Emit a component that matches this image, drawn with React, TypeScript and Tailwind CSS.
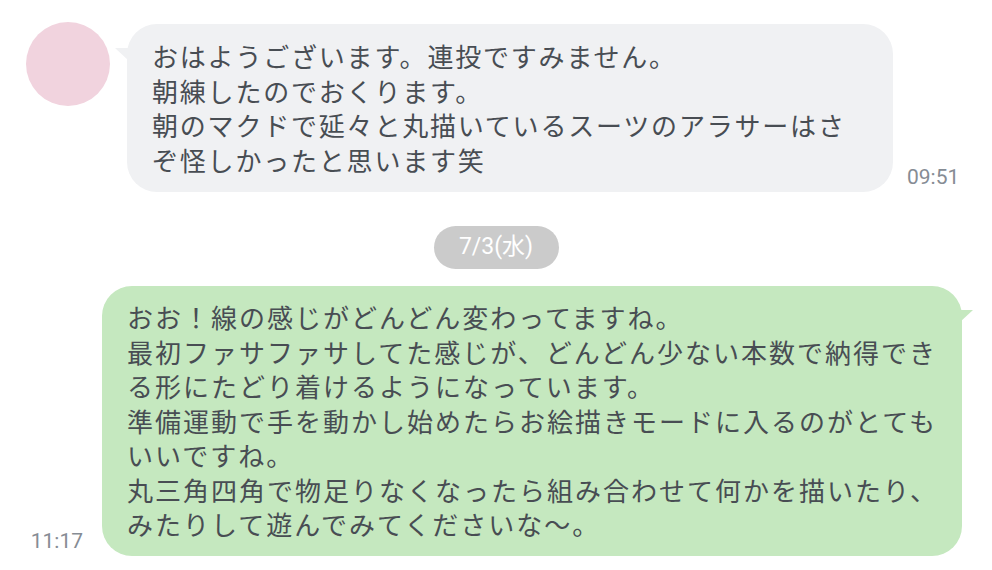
const grayLines = [
  'おはようございます。連投ですみません。',
  '朝練したのでおくります。',
  '朝のマクドで延々と丸描いているスーツのアラサーはさ',
  'ぞ怪しかったと思います笑',
];

const greenLines = [
  'おお！線の感じがどんどん変わってますね。',
  '最初ファサファサしてた感じが、どんどん少ない本数で納得でき',
  'る形にたどり着けるようになっています。',
  '準備運動で手を動かし始めたらお絵描きモードに入るのがとても',
  'いいですね。',
  '丸三角四角で物足りなくなったら組み合わせて何かを描いたり、',
  'みたりして遊んでみてくださいな〜。',
];

function Lines({ lines }: { lines: string[] }) {
  return (
    <>
      {lines.map((l, i) => (
        <div key={i} className="whitespace-nowrap">
          {l}
        </div>
      ))}
    </>
  );
}

function Time({ children }: { children: string }) {
  return (
    <span className="font-['Roboto',sans-serif] text-[21px] leading-none text-[#868c94]">
      {children}
    </span>
  );
}

export default function App() {
  return (
    <div className="w-[992px] h-[570px] overflow-hidden bg-white font-['Noto_Sans_CJK_JP',sans-serif] text-[#484d53]">
      {/* incoming message */}
      <div className="flex items-start pl-[26px] pt-[22px]">
        <div className="w-[84px] h-[84px] shrink-0 rounded-full bg-[#f1d3de]" />
        <div className="relative ml-[17px] mt-[2px] w-[766px] rounded-[30px] bg-[#f0f1f3] px-[25px] py-[15px] text-[26px] leading-[34.5px] tracking-[1.8px]">
          <svg className="absolute left-[-12px] top-[24px]" width="14" height="14" viewBox="0 0 14 14">
            <polygon points="0,0 14,0 14,13" fill="#f0f1f3" />
          </svg>
          <Lines lines={grayLines} />
        </div>
        <div className="self-end ml-[14px] mb-[3px]">
          <Time>09:51</Time>
        </div>
      </div>

      {/* date */}
      <div className="flex justify-center mt-[34px]">
        <div className="h-[43px] w-[125px] rounded-full bg-[#cbcbcb] flex items-center justify-center text-white text-[23px] font-['Roboto','Noto_Sans_CJK_JP',sans-serif]">
          7/3(水)
        </div>
      </div>

      {/* outgoing message */}
      <div className="flex items-end justify-end pr-[30px] mt-[17px]">
        <div className="mb-[3px] mr-[19px]">
          <Time>11:17</Time>
        </div>
        <div className="relative w-[860px] rounded-[30px] bg-[#c5e8bf] px-[25px] py-[14px] text-[26px] leading-[34.5px] tracking-[2px]">
          <svg className="absolute right-[-11px] top-[24px]" width="13" height="13" viewBox="0 0 13 13">
            <polygon points="0,0 13,0 0,12" fill="#c5e8bf" />
          </svg>
          <Lines lines={greenLines} />
        </div>
      </div>
    </div>
  );
}
